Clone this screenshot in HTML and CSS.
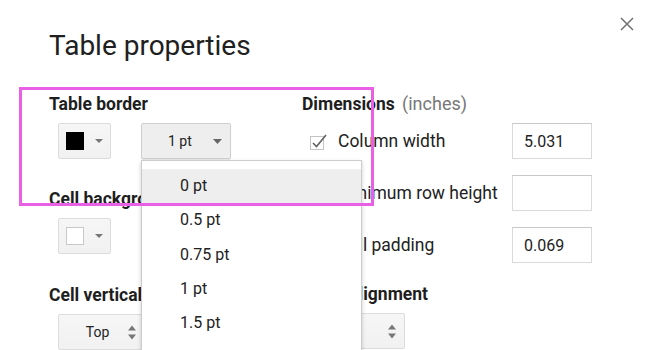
FILE: index.html
```html
<!DOCTYPE html>
<html lang="en">
<head>
    <meta charset="UTF-8">
    <meta name="viewport" content="width=device-width, initial-scale=1.0">
    <title>Table properties</title>
    <link rel="stylesheet" href="styles.css">
</head>
<body>

<div class="dialog">
    <div class="dialog-head">
        <h1 class="title">Table properties</h1>
        <button class="close" aria-label="Close">
            <svg width="14" height="14" viewBox="0 0 14 14"><path d="M1 1L13 13M13 1L1 13" stroke="#707070" stroke-width="1.5" fill="none"/></svg>
        </button>
    </div>

    <div class="columns">
        <div class="col-left">
            <section class="group">
                <h2 class="group-label">Table border</h2>
                <div class="controls">
                    <button class="color-btn">
                        <span class="swatch swatch-black"></span>
                        <svg class="caret" width="8" height="4" viewBox="0 0 8 4"><path d="M0 0H8L4 4Z" fill="#777"/></svg>
                    </button>
                    <div class="size-wrap">
                        <button class="size-btn">
                            <span>1 pt</span>
                            <svg class="caret" width="9" height="5" viewBox="0 0 9 5"><path d="M0 0H9L4.5 5Z" fill="#666"/></svg>
                        </button>
                        <ul class="menu">
                            <li class="menu-item active">0 pt</li>
                            <li class="menu-item">0.5 pt</li>
                            <li class="menu-item">0.75 pt</li>
                            <li class="menu-item">1 pt</li>
                            <li class="menu-item">1.5 pt</li>
                            <li class="menu-item">2.25 pt</li>
                            <li class="menu-item">3 pt</li>
                            <li class="menu-item">4.5 pt</li>
                            <li class="menu-item">6 pt</li>
                        </ul>
                    </div>
                </div>
            </section>

            <section class="group">
                <h2 class="group-label">Cell background color</h2>
                <div class="controls">
                    <button class="color-btn">
                        <span class="swatch swatch-white"></span>
                        <svg class="caret" width="8" height="4" viewBox="0 0 8 4"><path d="M0 0H8L4 4Z" fill="#777"/></svg>
                    </button>
                </div>
            </section>

            <section class="group group-last">
                <h2 class="group-label">Cell vertical alignment</h2>
                <div class="controls">
                    <button class="select-btn">
                        <span class="select-text">Top</span>
                        <svg class="spinner" width="8" height="15" viewBox="0 0 8 15"><path d="M0 5.5L4 0.5L8 5.5Z M0 9.5L4 14.5L8 9.5Z" fill="#777"/></svg>
                    </button>
                </div>
            </section>
        </div>

        <div class="col-right">
            <h2 class="group-label">Dimensions <span class="unit">(inches)</span></h2>
            <div class="dim-rows">
                <div class="dim-row">
                    <span class="dim-check">
                        <svg width="18" height="18" viewBox="0 0 18 18">
                            <rect x="0.5" y="3.5" width="13" height="13" fill="#fff" stroke="#c4c4c4"/>
                            <path d="M3 10L6.5 13.5L16 2" stroke="#606060" stroke-width="1.6" fill="none"/>
                        </svg>
                    </span>
                    <span class="dim-label">Column width</span>
                    <input class="dim-input" type="text" value="5.031">
                </div>
                <div class="dim-row">
                    <span class="dim-check"></span>
                    <span class="dim-label">Minimum row height</span>
                    <input class="dim-input" type="text" value="">
                </div>
                <div class="dim-row">
                    <span class="dim-check"></span>
                    <span class="dim-label">Cell padding</span>
                    <input class="dim-input" type="text" value="0.069">
                </div>
            </div>

            <h2 class="group-label">Table alignment</h2>
            <div class="controls controls-right">
                <button class="select-btn select-wide">
                    <span class="select-text">Left</span>
                    <svg class="spinner" width="8" height="15" viewBox="0 0 8 15"><path d="M0 5.5L4 0.5L8 5.5Z M0 9.5L4 14.5L8 9.5Z" fill="#777"/></svg>
                </button>
            </div>
        </div>
    </div>
</div>

<div class="highlight"></div>

</body>
</html>
```

FILE: styles.css
```css
html, body {
    height: 350px;
    overflow: hidden;
}
body {
    margin: 0;
    background-color: #ffffff;
    color: #222222;
    font-family: Roboto, "Noto Sans", Arial, sans-serif;
    position: relative;
}
button {
    font-family: inherit;
    color: inherit;
    cursor: pointer;
}
.dialog {
    padding: 0 16px 0 49px;
}
.dialog-head {
    display: flex;
    justify-content: space-between;
    align-items: flex-start;
}
.title {
    margin: 30px 0 0 0;
    font-size: 28px;
    line-height: 32px;
    font-weight: 400;
    color: #202020;
}
.close {
    margin-top: 16px;
    padding: 0;
    border: none;
    background: none;
    width: 16px;
    height: 16px;
    display: flex;
    align-items: center;
    justify-content: center;
}
.columns {
    display: grid;
    grid-template-columns: 253px 290px;
    margin-top: 32px;
}
.group-label {
    margin: 0 0 9px 0;
    font-size: 17.5px;
    line-height: 20px;
    font-weight: 700;
    color: #1e1e1e;
    white-space: nowrap;
}
.unit {
    font-weight: 400;
    color: #777777;
    margin-left: 3px;
    font-size: 18px;
}
.group {
    margin-bottom: 30px;
}
.group-last {
    margin-top: 31px;
}
.controls {
    display: flex;
    gap: 30px;
    padding-left: 9px;
}
.controls-right {
    padding-left: 9px;
}
.color-btn,
.size-btn,
.select-btn {
    height: 36px;
    border: 1px solid #dcdcdc;
    border-radius: 2px;
    background-color: #f5f5f5;
    background-image: linear-gradient(#f6f6f6, #f1f1f1);
    display: flex;
    align-items: center;
    padding: 0;
}
.color-btn {
    width: 53px;
    padding-left: 7px;
    gap: 11px;
}
.swatch {
    width: 18px;
    height: 18px;
    box-sizing: border-box;
}
.swatch-black {
    background-color: #000000;
}
.swatch-white {
    background-color: #ffffff;
    border: 1px solid #c8c8c8;
}
.size-wrap {
    position: relative;
}
.size-btn {
    width: 90px;
    padding: 0 8px 0 26px;
    justify-content: space-between;
    font-size: 14px;
    background-image: none;
    background-color: #eeeeee;
    border-color: #cfcfcf;
    box-shadow: 0 1px 1px rgba(0, 0, 0, 0.1);
}
.select-btn {
    width: 87px;
    padding: 0 8px 0 0;
    font-size: 14px;
}
.select-text {
    flex: 1;
    text-align: center;
    padding-left: 8px;
}
.select-wide {
    width: 94px;
}
.select-wide .select-text {
    text-align: left;
    padding-left: 22px;
}
.menu {
    position: absolute;
    top: 37px;
    left: 0;
    width: 221px;
    margin: 0;
    padding: 8px 0;
    list-style: none;
    background-color: #ffffff;
    border: 1px solid #cccccc;
    box-sizing: border-box;
    box-shadow: 0 2px 4px rgba(0, 0, 0, 0.2);
    z-index: 2;
}
.menu-item {
    height: 34.3px;
    line-height: 34px;
    padding-left: 38px;
    font-size: 16px;
    color: #222222;
}
.menu-item.active {
    background-color: #eeeeee;
}
.dim-rows {
    display: flex;
    flex-direction: column;
    gap: 16px;
    margin-top: 1px;
    margin-bottom: 21px;
}
.dim-row {
    display: flex;
    align-items: center;
    height: 36px;
    padding-left: 8px;
}
.dim-check {
    width: 28px;
    height: 18px;
    margin-top: 2px;
}
.dim-label {
    flex: 1;
    font-size: 17.5px;
    line-height: 20px;
    white-space: nowrap;
}
.dim-input {
    width: 80px;
    height: 36px;
    box-sizing: border-box;
    border: 1px solid #d9d9d9;
    border-top-color: #c8c8c8;
    padding: 0 0 0 11px;
    font-family: inherit;
    font-size: 16px;
    color: #222222;
    outline: none;
}
.highlight {
    position: absolute;
    left: 19px;
    top: 87px;
    width: 355px;
    height: 119px;
    box-sizing: border-box;
    border: 3px solid #e95fe6;
    z-index: 5;
    pointer-events: none;
}
```
